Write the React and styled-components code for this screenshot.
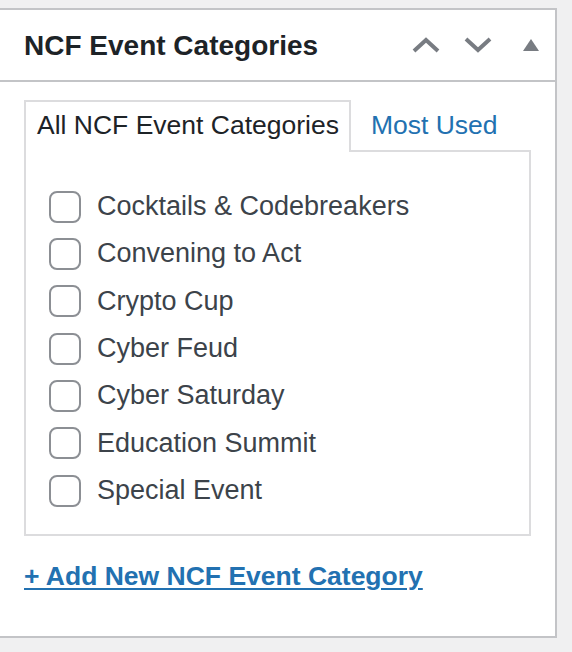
import React from "react";
import styled, { createGlobalStyle } from "styled-components";

const GlobalStyle = createGlobalStyle`
  body {
    margin: 0;
    background: #f0f0f1;
    font-family: "Liberation Sans", Arial, sans-serif;
  }
`;

const categories = [
  "Cocktails & Codebreakers",
  "Convening to Act",
  "Crypto Cup",
  "Cyber Feud",
  "Cyber Saturday",
  "Education Summit",
  "Special Event",
];

export default function App() {
  return (
    <>
      <GlobalStyle />
      <Postbox>
        <Header>
          <Title>NCF Event Categories</Title>
          <Handles>
            <HandleButton aria-label="Move up">
              <svg width="28" height="16" viewBox="0 0 28 16">
                <path d="M2 14 L14 3 L26 14" fill="none" stroke="#787c82" strokeWidth="4" />
              </svg>
            </HandleButton>
            <HandleButton aria-label="Move down">
              <svg width="28" height="16" viewBox="0 0 28 16">
                <path d="M2 2 L14 13 L26 2" fill="none" stroke="#787c82" strokeWidth="4" />
              </svg>
            </HandleButton>
            <HandleButton aria-label="Toggle panel" spaced>
              <svg width="16" height="12" viewBox="0 0 16 12">
                <path d="M8 0 L16 12 L0 12 Z" fill="#787c82" />
              </svg>
            </HandleButton>
          </Handles>
        </Header>
        <Inside>
          <Tabs>
            <Tab active>All NCF Event Categories</Tab>
            <Tab>Most Used</Tab>
          </Tabs>
          <Panel>
            {categories.map((name) => (
              <Row key={name}>
                <Checkbox type="checkbox" />
                <Label>{name}</Label>
              </Row>
            ))}
          </Panel>
          <AddLink href="#">+ Add New NCF Event Category</AddLink>
        </Inside>
      </Postbox>
    </>
  );
}

const Postbox = styled.div`
  margin-top: 8px;
  width: 555px;
  background: #fff;
  border: 2px solid #c3c4c7;
  border-left: none;
`;

const Header = styled.div`
  display: flex;
  align-items: center;
  justify-content: space-between;
  height: 70px;
  padding: 0 16px 0 24px;
  border-bottom: 2px solid #c3c4c7;
`;

const Title = styled.h2`
  margin: 0;
  font-size: 28px;
  font-weight: 700;
  color: #1d2327;
  padding-top: 2px;
`;

const Handles = styled.div`
  display: flex;
  align-items: center;
  gap: 24px;
`;

const HandleButton = styled.button`
  display: flex;
  align-items: center;
  justify-content: center;
  padding: 0;
  background: none;
  border: none;
  height: 20px;
  margin-left: ${(p) => (p.spaced ? "7px" : "0")};
`;

const Inside = styled.div`
  padding: 18px 24px 42px;
`;

const Tabs = styled.div`
  display: flex;
  align-items: flex-start;
`;

const Tab = styled.div`
  font-size: 26.5px;
  line-height: 47px;
  padding: 0 ${(p) => (p.active ? "10px" : "22px")} 3px ${(p) => (p.active ? "11px" : "18px")};
  color: ${(p) => (p.active ? "#1d2327" : "#2271b1")};
  background: ${(p) => (p.active ? "#fff" : "transparent")};
  border: 2px solid ${(p) => (p.active ? "#dcdcde" : "transparent")};
  border-bottom: none;
  margin-bottom: -2px;
  position: relative;
  z-index: 1;
`;

const Panel = styled.div`
  border: 2px solid #dcdcde;
  padding: 31px 23px 20px;
`;

const Row = styled.label`
  display: flex;
  align-items: center;
  gap: 16px;
  height: 47.33px;
`;

const Checkbox = styled.input`
  appearance: none;
  margin: 0;
  width: 32px;
  height: 32px;
  border: 2px solid #8c8f94;
  border-radius: 8px;
  background: #fff;
  box-sizing: border-box;
`;

const Label = styled.span`
  font-size: 27px;
  color: #3c434a;
`;

const AddLink = styled.a`
  display: inline-block;
  margin-top: 22px;
  font-size: 26.5px;
  line-height: 36px;
  font-weight: 700;
  color: #2271b1;
  text-decoration: underline;
  text-underline-offset: 3px;
`;
